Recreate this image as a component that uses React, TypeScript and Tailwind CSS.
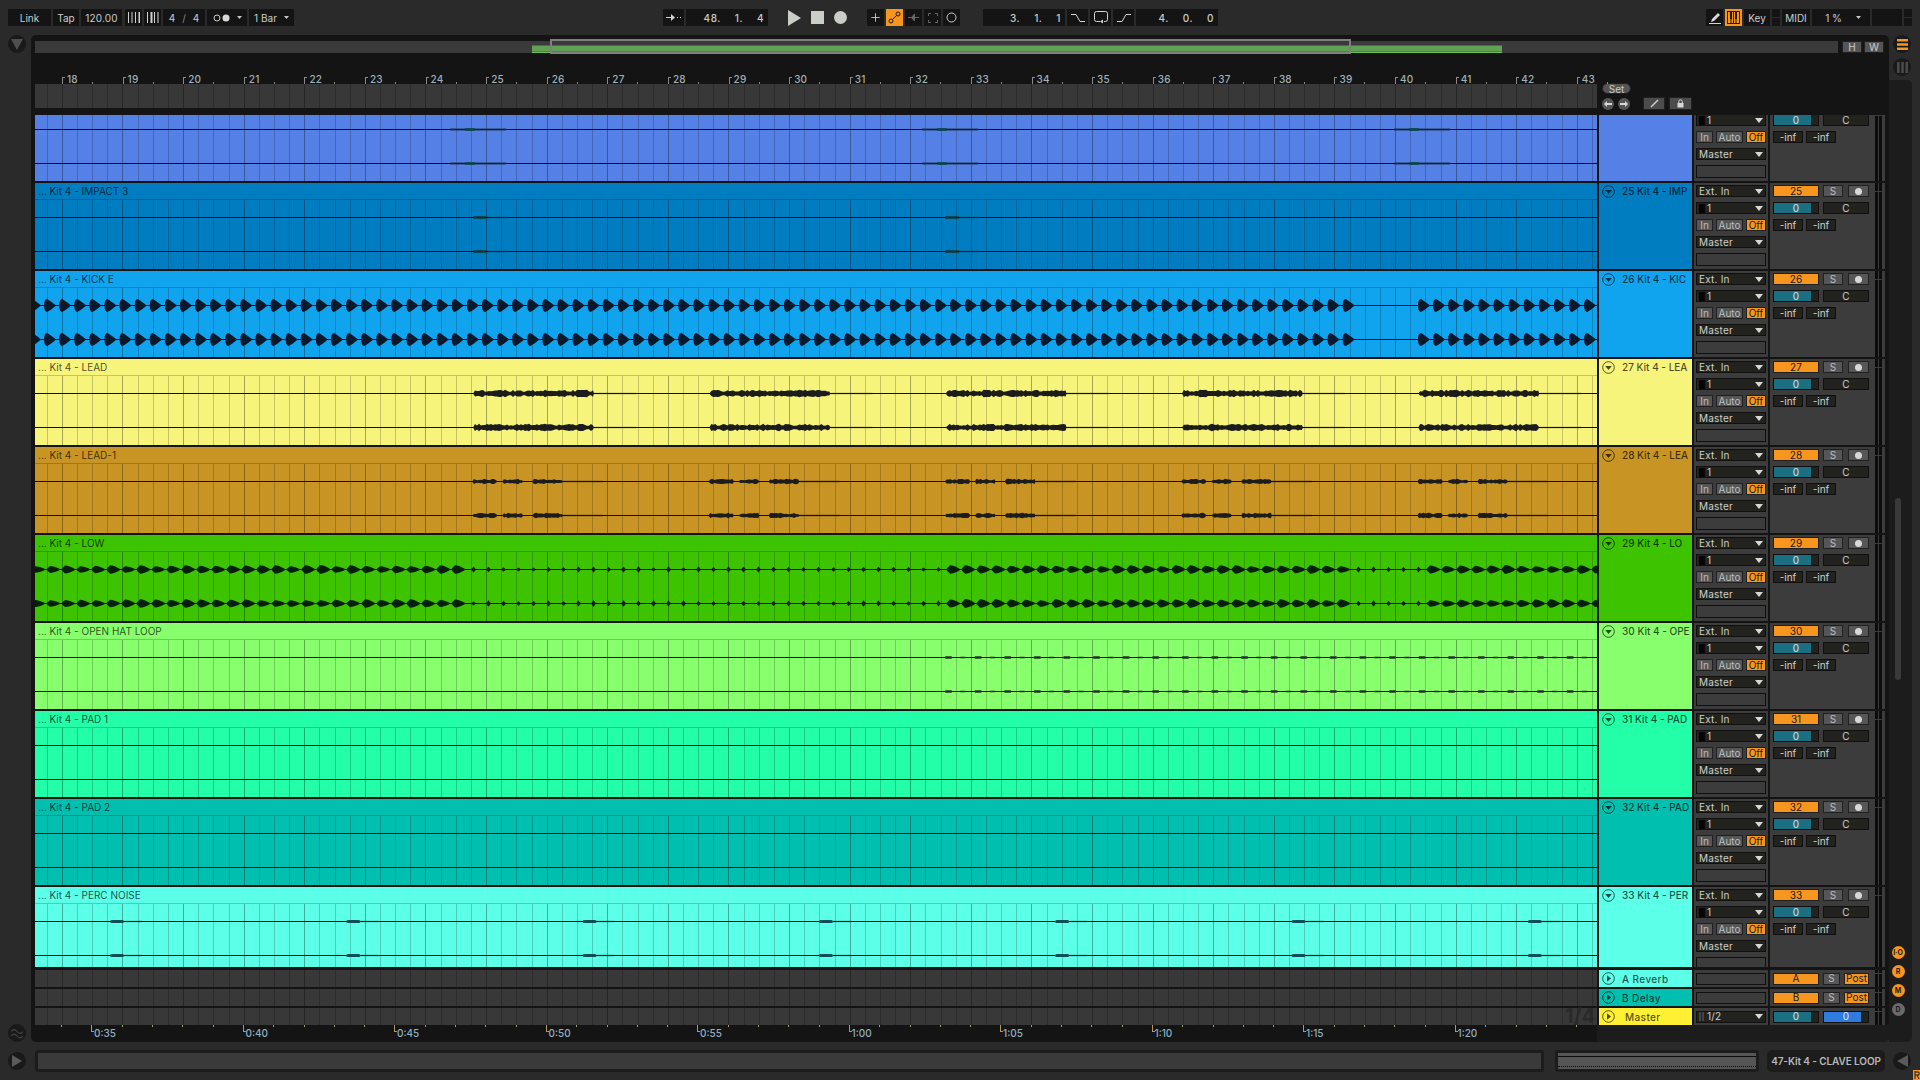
import { Plus } from "lucide-react";
import type { ReactNode } from "react";

const CLIP_W = 1562;

// tiny seeded random so the waveforms stay the same between renders
const rng = (seed: number) => () => {
  seed = (seed * 9301 + 49297) % 233280;
  return seed / 233280;
};

const range = (n: number) => Array.from({ length: n }, (_, i) => i);

const gridPaths = (h: number) => {
  let beats = "";
  let bars = "";
  for (let i = 0; i < 104; i++) {
    const x = Math.round(11.7 + 15.15 * i) + 0.5;
    if ((i + 3) % 4 === 0) bars += `M${x} 0V${h}`;
    else beats += `M${x} 0V${h}`;
  }
  return { beats, bars };
};

const Grid = ({ h }: { h: number }) => {
  const { beats, bars } = gridPaths(h);
  return (
    <>
      <path d={beats} stroke="#000" strokeOpacity="0.2" />
      <path d={bars} stroke="#000" strokeOpacity="0.32" />
    </>
  );
};

// generic noisy blob between x0 and x1 around the lane line
const blob = (x0: number, x1: number, y: number, amp: number, rand: () => number) => {
  let top = `M${x0} ${y}`;
  let bottom = "";
  for (let x = x0 + 2; x < x1; x += 2) {
    const h = amp * (0.55 + rand() * 0.7);
    top += `L${x} ${(y - h).toFixed(1)}`;
    bottom = `L${x} ${(y + h).toFixed(1)}` + bottom;
  }
  return `${top}L${x1} ${y}${bottom}Z`;
};

const kickShape = (x: number, y: number) =>
  `M${x} ${y}Q${x} ${y - 6.5} ${x + 3} ${y - 6.5}Q${x + 6} ${y - 5} ${x + 12} ${y}Q${x + 6} ${y + 5} ${x + 3} ${y + 6.5}Q${x} ${y + 6.5} ${x} ${y}Z`;

const lowShape = (x: number, y: number, hh: number) =>
  `M${x} ${y}L${x + 4} ${y - hh}Q${x + 8} ${y - hh} ${x + 15} ${y}Q${x + 8} ${y + hh} ${x + 4} ${y + hh}Z`;

const tickShape = (x: number, y: number, hh: number) =>
  `M${x} ${y}L${x + 2.5} ${y - hh}L${x + 5} ${y}L${x + 2.5} ${y + hh}Z`;

type WaveKind = "none" | "blue" | "impact" | "kick" | "lead" | "lead1" | "low" | "hat" | "perc";

const Lane = ({ kind, y, seed }: { kind: WaveKind; y: number; seed: number }) => {
  const rand = rng(seed);
  const off = -35;
  if (kind === "kick") {
    let d = "";
    for (let x = 29; x < 1343; x += 15.1) d += kickShape(x + off, y);
    for (let x = 1418; x < 1600; x += 15.1) d += kickShape(x + off, y);
    return <path d={d} fill="#07192b" />;
  }
  if (kind === "low") {
    let d = "";
    for (let x = 31; x < 1600; x += 15) {
      const big = x < 462 || (x >= 944 && x < 1345) || x >= 1418;
      if (big) d += lowShape(x + off, y, 3.2 + rand() * 1.2);
      else d += tickShape(x + off + 5, y, 2 + rand() * 1.4);
    }
    return <path d={d} fill="#04200a" />;
  }
  if (kind === "hat") {
    return (
      <>
        {range(44).map((i) => (
          <rect
            key={i}
            x={945 + i * 14.8 + off}
            y={y - (i % 2 ? 1 : 1.5)}
            width={i % 2 ? 6 : 7}
            height={i % 2 ? 2 : 3}
            rx={1}
            fill="#24402a"
            opacity={i % 2 ? 0.55 : 0.8}
          />
        ))}
      </>
    );
  }
  if (kind === "lead") {
    return (
      <>
        {range(5).map((i) => {
          const s = 473 + i * 236.3 + off;
          return (
            <g key={i}>
              <path d={blob(s, s + 121, y, 3, rand)} fill="#1c1c1c" />
              <rect x={s + 121} y={y - 1} width={42} height={2} fill="#1c1c1c" opacity="0.22" />
            </g>
          );
        })}
      </>
    );
  }
  if (kind === "lead1") {
    return (
      <>
        {range(5).map((i) => {
          const s = 472 + i * 236.3 + off;
          return (
            <g key={i}>
              <path d={blob(s, s + 26, y, 2.2, rand)} fill="#1c1c1c" />
              <path d={blob(s + 30, s + 51, y, 2.2, rand)} fill="#1c1c1c" />
              <path d={blob(s + 60, s + 91, y, 2.2, rand)} fill="#1c1c1c" />
              <rect x={s + 91} y={y - 1} width={40} height={2} fill="#1c1c1c" opacity="0.3" />
            </g>
          );
        })}
      </>
    );
  }
  if (kind === "perc") {
    return (
      <>
        {range(7).map((i) => {
          const s = 110 + i * 236.3 + off;
          return (
            <g key={i}>
              <rect x={s} y={y - 1.5} width={14} height={3} rx={1.5} fill="#0b4f5a" />
              <rect x={s + 14} y={y - 1} width={18} height={2} fill="#0b4f5a" opacity="0.25" />
            </g>
          );
        })}
      </>
    );
  }
  if (kind === "impact") {
    return (
      <>
        {[473, 945].map((x) => (
          <g key={x}>
            <rect x={x + off} y={y - 1.5} width={14} height={3} fill="#0b3a3e" opacity="0.8" />
            <rect x={x + off + 14} y={y - 1} width={20} height={2} fill="#0b3a3e" opacity="0.3" />
          </g>
        ))}
      </>
    );
  }
  if (kind === "blue") {
    return (
      <>
        {[470, 942, 1414].map((x) => (
          <g key={x}>
            <rect x={x + off - 20} y={y - 1.5} width={56} height={3} fill="#1b3550" opacity="0.45" />
            <rect x={x + off - 5} y={y - 1.5} width={10} height={3} fill="#0b4a50" opacity="0.85" />
          </g>
        ))}
      </>
    );
  }
  return null;
};

const Waveform = ({ kind, seed }: { kind: WaveKind; seed: number }) => (
  <svg width={CLIP_W} height={69} className="block shrink-0">
    <Grid h={69} />
    <rect x={0} y={17} width={CLIP_W} height={1} fill="#0d0d0d" />
    <rect x={0} y={51} width={CLIP_W} height={1} fill="#0d0d0d" />
    <Lane kind={kind} y={17.5} seed={seed} />
    <Lane kind={kind} y={51.5} seed={seed + 7} />
  </svg>
);

const Caret = ({ color = "#d8d8d8" }: { color?: string }) => (
  <svg width="8" height="5" viewBox="0 0 8 5" className="shrink-0">
    <path d="M0 0h8L4 5z" fill={color} />
  </svg>
);

const Drop = ({ children, icon }: { children?: ReactNode; icon?: ReactNode }) => (
  <div className="flex h-3 items-center border border-[#101010] bg-[#22221e] pr-[2px] pl-[2px] text-[#d0d0c9]">
    {icon}
    <span className="-mt-px flex-1 truncate tracking-[0.2px]">{children}</span>
    <Caret />
  </div>
);

const EmptyBox = () => <div className="h-[13px] shrink-0 border border-[#101010] bg-[#3c3c3c]" />;

const Vol = ({ label, color = "bg-[#1b6f82]" }: { label: string; color?: string }) => (
  <div className="relative flex h-3 w-[46px] items-center justify-center border border-[#101010] bg-[#22221e] text-[#dfe8e8]">
    <div className={`absolute top-0 bottom-0 left-0 w-[37px] ${color}`} />
    <span className="relative -mt-px">{label}</span>
  </div>
);

const Meter = ({ segment = 8 }: { segment?: number }) => (
  <div className="flex h-full w-[10px] shrink-0 gap-px pr-[3px]">
    {[0, 1].map((i) => (
      <div key={i} className="flex w-[3px] flex-col gap-px">
        <div className="shrink-0 bg-[#0c0c0c]" style={{ height: segment }} />
        <div className="flex-1 bg-[#0c0c0c]" />
      </div>
    ))}
  </div>
);

const Toggle = ({ children, w }: { children?: ReactNode; w: string }) => (
  <div className={`flex h-3 items-center justify-center border border-[#202020] bg-[#565656] pb-px text-[#bcbcbc] ${w}`}>
    {children}
  </div>
);

const OrangeBtn = ({ children, w }: { children: ReactNode; w: string }) => (
  <div className={`flex h-3 items-center justify-center border border-[#202020] bg-[#f7961e] pb-px text-[#1c1c1c] ${w}`}>
    {children}
  </div>
);

const DarkBtn = ({ children, w }: { children: ReactNode; w: string }) => (
  <div className={`flex h-3 items-center justify-center border border-[#101010] bg-[#22221e] pb-px text-[#d0d0c9] ${w}`}>
    {children}
  </div>
);

const Unfold = ({ open = true }: { open?: boolean }) => (
  <svg width="13" height="13" viewBox="0 0 13 13" className="shrink-0">
    <circle cx="6.5" cy="6.5" r="5.8" fill="none" stroke="#000" strokeOpacity="0.65" />
    {open ? (
      <path d="M3.2 5h6.6L6.5 9z" fill="#000" fillOpacity="0.7" />
    ) : (
      <path d="M5 3.2v6.6L9 6.5z" fill="#000" fillOpacity="0.7" />
    )}
  </svg>
);

type Track = { n: number; name: string; short: string; color: string; wave: WaveKind; height: string; clipped?: boolean };

const tracks: Track[] = [
  { n: 24, name: "", short: "", color: "#5580e6", wave: "blue", height: "h-[66px]", clipped: true },
  { n: 25, name: "IMPACT 3", short: "IMP", color: "#007dc0", wave: "impact", height: "h-[86px]" },
  { n: 26, name: "KICK E", short: "KIC", color: "#10a4ee", wave: "kick", height: "h-[86px]" },
  { n: 27, name: "LEAD", short: "LEA", color: "#f7f47c", wave: "lead", height: "h-[86px]" },
  { n: 28, name: "LEAD-1", short: "LEA", color: "#c89525", wave: "lead1", height: "h-[86px]" },
  { n: 29, name: "LOW", short: "LO", color: "#3dc300", wave: "low", height: "h-[86px]" },
  { n: 30, name: "OPEN HAT LOOP", short: "OPE", color: "#88ff6c", wave: "hat", height: "h-[86px]" },
  { n: 31, name: "PAD 1", short: "PAD", color: "#22ffa8", wave: "none", height: "h-[86px]" },
  { n: 32, name: "PAD 2", short: "PAD", color: "#00bfaf", wave: "none", height: "h-[86px]" },
  { n: 33, name: "PERC NOISE", short: "PER", color: "#5cffe8", wave: "perc", height: "h-[80px]" },
];

const TrackRow = ({ t }: { t: Track }) => (
  <div className={`flex shrink-0 gap-[2px] overflow-hidden pl-1 ${t.height}`}>
    <div className="w-[1562px] shrink-0 overflow-hidden" style={{ backgroundColor: t.color }}>
      <div className={`flex h-[86px] flex-col ${t.clipped ? "-mt-5" : ""}`}>
        <div className="h-[17px] shrink-0 border-b border-black/20 pt-[2px] pl-[3px] text-black/70">
          {t.name && `... Kit 4 - ${t.name}`}
        </div>
        <Waveform kind={t.wave} seed={t.n * 31} />
      </div>
    </div>
    <div className="flex w-[93px] shrink-0 gap-[7px] pt-[2px] pl-[3px] font-medium text-black/70" style={{ backgroundColor: t.color }}>
      {!t.clipped && (
        <>
          <Unfold />
          <span className="whitespace-nowrap">{`${t.n} Kit 4 - ${t.short}`}</span>
        </>
      )}
    </div>
    <div className="w-[74px] shrink-0 overflow-hidden bg-[#3c3c3c]">
      <div className={`flex h-[86px] flex-col gap-[5px] px-[2px] pt-[2px] ${t.clipped ? "-mt-5" : ""}`}>
        <Drop>{t.clipped ? "" : "Ext. In"}</Drop>
        <Drop icon={<div className="mr-[2px] h-[9px] w-[6px] bg-[#050505]" />}>1</Drop>
        <div className="flex gap-[3px]">
          <Toggle w="w-[17px]">In</Toggle>
          <Toggle w="w-[27px]">Auto</Toggle>
          <OrangeBtn w="w-5">Off</OrangeBtn>
        </div>
        <Drop>Master</Drop>
        <EmptyBox />
      </div>
    </div>
    <div className="flex w-[115px] shrink-0 overflow-hidden bg-[#3c3c3c]">
      <div className={`flex h-[86px] w-[105px] shrink-0 flex-col gap-[5px] pt-[2px] pl-[3px] ${t.clipped ? "-mt-5" : ""}`}>
        <div className="flex">
          {t.clipped ? (
            <div className="h-3" />
          ) : (
            <>
              <OrangeBtn w="w-[46px]">{t.n}</OrangeBtn>
              <div className="ml-1">
                <Toggle w="w-5">S</Toggle>
              </div>
              <div className="ml-[5px]">
                <Toggle w="w-[21px]">
                  <div className="mt-px h-[7px] w-[7px] rounded-full bg-[#d8d8d8]" />
                </Toggle>
              </div>
            </>
          )}
        </div>
        <div className="flex gap-1">
          <Vol label="0" />
          <DarkBtn w="w-[46px]">C</DarkBtn>
        </div>
        <div className="flex gap-[3px]">
          <DarkBtn w="w-[30px]">-inf</DarkBtn>
          <DarkBtn w="w-[30px]">-inf</DarkBtn>
        </div>
      </div>
      <Meter segment={t.clipped ? 0 : 8} />
    </div>
  </div>
);

const ReturnRow = ({
  label,
  color,
  indent,
  input,
  mixer,
  overlay,
}: {
  label: string;
  color: string;
  indent?: string;
  input: ReactNode;
  mixer: ReactNode;
  overlay?: ReactNode;
}) => (
  <div className="flex h-[17px] shrink-0 gap-[2px] pl-1">
    <div className="relative w-[1562px] shrink-0 bg-[#383838]">
      <svg width={CLIP_W} height={17} className="block">
        <Grid h={17} />
      </svg>
      {overlay}
    </div>
    <div className={`flex w-[93px] shrink-0 items-center gap-[7px] pl-[3px] font-medium text-black/70 ${color}`}>
      <Unfold open={false} />
      <span className={`tracking-[0.4px] ${indent ?? ""}`}>{label}</span>
    </div>
    <div className="flex w-[74px] shrink-0 flex-col justify-center bg-[#3c3c3c] px-[2px]">{input}</div>
    <div className="flex w-[115px] shrink-0 items-center bg-[#3c3c3c]">
      <div className="flex w-[105px] shrink-0 pl-[3px]">{mixer}</div>
      <Meter segment={3} />
    </div>
  </div>
);

const Tb = ({ w, children, className = "" }: { w: string; children?: ReactNode; className?: string }) => (
  <div className={`flex h-[17px] shrink-0 items-center justify-center bg-[#141414] text-[#c8cdcd] ${w} ${className}`}>
    {children}
  </div>
);

const Readout = ({ parts }: { parts: string[] }) => (
  <Tb w="w-[82px]" className="justify-end gap-[14px] pr-1 font-medium tracking-[0.5px]">
    {parts.map((p, i) => (
      <span key={i}>{p}</span>
    ))}
  </Tb>
);

const BarsIcon = ({ thick }: { thick: number }) => (
  <svg width="13" height="11" viewBox="0 0 13 11">
    {range(4).map((i) => (
      <rect key={i} x={i * 3.5 + 1} y="0" width={i === thick ? 2 : 1} height="11" fill="#d0d0d0" />
    ))}
  </svg>
);

const Icon = ({ children, w = 17, h = 13 }: { children: ReactNode; w?: number; h?: number }) => (
  <svg width={w} height={h} viewBox={`0 0 ${w} ${h}`} fill="none" stroke="#d4d4d4">
    {children}
  </svg>
);

const TopBar = () => (
  <div className="flex h-[35px] shrink-0 items-center pl-2">
    <Tb w="w-[43px]">Link</Tb>
    <Tb w="w-[26px] ml-[2px]">Tap</Tb>
    <Tb w="w-[41px] ml-[2px]" className="tracking-[0.2px]">120.00</Tb>
    <Tb w="w-[17px] ml-[3px]">
      <BarsIcon thick={3} />
    </Tb>
    <Tb w="w-[17px] ml-[2px]">
      <BarsIcon thick={1} />
    </Tb>
    <Tb w="w-[42px] ml-[2px]" className="gap-[7px]">
      <span>4</span>
      <span className="text-[#888]">/</span>
      <span>4</span>
    </Tb>
    <Tb w="w-[40px] ml-[2px]" className="gap-[7px]">
      <svg width="17" height="8" viewBox="0 0 17 8">
        <circle cx="4" cy="4" r="3" fill="none" stroke="#c8c8c8" />
        <circle cx="13" cy="4" r="3.5" fill="#d8d8d8" />
      </svg>
      <svg width="5" height="3" viewBox="0 0 5 3">
        <path d="M0 0h5L2.5 3z" fill="#c8c8c8" />
      </svg>
    </Tb>
    <Tb w="w-[45px] ml-[2px]" className="gap-[7px]">
      <span>1 Bar</span>
      <svg width="5" height="3" viewBox="0 0 5 3">
        <path d="M0 0h5L2.5 3z" fill="#c8c8c8" />
      </svg>
    </Tb>

    <Tb w="w-[21px] ml-[369px]">
      <Icon>
        <path d="M1 6.5h6M12 6.5h1M15 6.5h1" />
        <path d="M6 3l4 3.5L6 10z" fill="#d4d4d4" stroke="none" />
      </Icon>
    </Tb>
    <div className="ml-[2px]">
      <Readout parts={["48.", "1.", "4"]} />
    </div>
    <svg width="13" height="16" viewBox="0 0 13 16" className="ml-5 shrink-0">
      <path d="M0 0l13 8L0 16z" fill="#c9cec6" />
    </svg>
    <div className="ml-[10px] h-[13px] w-[13px] shrink-0 bg-[#c9cec6]" />
    <div className="ml-[10px] h-[13px] w-[13px] shrink-0 rounded-full bg-[#c9cec6]" />

    <Tb w="w-[17px] ml-5">
      <Plus size={13} color="#e0e0e0" strokeWidth={1.5} />
    </Tb>
    <Tb w="w-[17px] ml-[2px]" className="!bg-[#f7961e]">
      <svg width="13" height="13" viewBox="0 0 13 13" fill="none" stroke="#1c1c1c">
        <circle cx="3" cy="10" r="2" />
        <circle cx="10" cy="3" r="2" />
        <path d="M4.5 8.5l4-4" />
      </svg>
    </Tb>
    <Tb w="w-[17px] ml-[2px]">
      <svg width="11" height="9" viewBox="0 0 11 9">
        <path d="M0 4.5h11M6.5 1L3.5 4.5 6.5 8z" stroke="#666" fill="#666" />
      </svg>
    </Tb>
    <Tb w="w-[17px] ml-[2px]">
      <svg width="10" height="10" viewBox="0 0 10 10" fill="none" stroke="#666">
        <path d="M.5 3V.5H3M7 .5h2.5V3M9.5 7v2.5H7M3 9.5H.5V7" />
      </svg>
    </Tb>
    <Tb w="w-[17px] ml-[2px]">
      <svg width="11" height="11" viewBox="0 0 11 11">
        <circle cx="5.5" cy="5.5" r="4.5" fill="none" stroke="#d0d0d0" />
      </svg>
    </Tb>

    <div className="ml-[23px]">
      <Readout parts={["3.", "1.", "1"]} />
    </div>
    <Tb w="w-[21px] ml-[2px]">
      <Icon w={14} h={10}>
        <path d="M0 1.5h5l4 7h5" />
      </Icon>
    </Tb>
    <Tb w="w-[21px] ml-[2px]">
      <Icon w={14} h={13}>
        <path d="M6 10.5H2.5a2 2 0 0 1-2-2v-6a2 2 0 0 1 2-2h9a2 2 0 0 1 2 2v6a2 2 0 0 1-2 2H10" />
        <path d="M9 8.5v4L6 10.5z" fill="#d4d4d4" stroke="none" />
      </Icon>
    </Tb>
    <Tb w="w-[21px] ml-[2px]">
      <Icon w={14} h={10}>
        <path d="M0 8.5h5l4-7h5" />
      </Icon>
    </Tb>
    <div className="ml-[2px]">
      <Readout parts={["4.", "0.", "0"]} />
    </div>

    <Tb w="w-[17px] ml-[488px]">
      <svg width="12" height="13" viewBox="0 0 12 13">
        <path d="M3 8l6-6 2 2-6 6-3 1z" fill="#d8d8d8" />
        <rect x="0" y="12" width="12" height="1" fill="#d8d8d8" />
      </svg>
    </Tb>
    <Tb w="w-[17px] ml-[2px]" className="!bg-[#f7961e]">
      <svg width="13" height="13" viewBox="0 0 13 13">
        <rect x="0.5" y="0.5" width="12" height="12" fill="none" stroke="#1c1c1c" />
        <path d="M3 1h2v7H3zM8 1h2v7H8z" fill="#1c1c1c" />
        <path d="M4 8v4M6.5 1v11M9 8v4" stroke="#1c1c1c" />
      </svg>
    </Tb>
    <Tb w="w-[26px] ml-[2px]">Key</Tb>
    <div className="ml-[2px] flex h-[17px] w-2 shrink-0 flex-col gap-px">
      <div className="flex-1 bg-[#141414]" />
      <div className="flex-1 bg-[#141414]" />
    </div>
    <Tb w="w-[28px] ml-[2px]">MIDI</Tb>
    <Tb w="w-[58px] ml-[2px]" className="gap-[14px] pl-1">
      <span>1 %</span>
      <svg width="5" height="3" viewBox="0 0 5 3">
        <path d="M0 0h5L2.5 3z" fill="#c8c8c8" />
      </svg>
    </Tb>
    <Tb w="w-[30px] ml-[2px]" />
    <div className="ml-[2px] flex h-[17px] w-2 shrink-0 flex-col gap-px">
      <div className="flex-1 bg-[#141414]" />
      <div className="flex-1 bg-[#141414]" />
    </div>
  </div>
);

const Overview = () => (
  <div className="mt-[6px] flex h-3 shrink-0 pl-1">
    <div className="relative w-[1803px] shrink-0 bg-[#3a3a3a]">
      <div className="absolute top-1 bottom-0 left-[497px] flex w-[970px] flex-col">
        <div className="h-[1px] bg-[#4b6c4a]" />
        <div className="flex-1 bg-[#62a055]" />
        <div className="h-[1px] bg-[#2c8a78]" />
        <div className="h-[1px] bg-[#6cc050]" />
      </div>
      <div className="absolute -top-[2px] -bottom-px left-[515px] w-[801px] border-2 border-[#7f7f7f]" />
    </div>
    <div className="ml-1 flex h-3 w-5 shrink-0 items-center justify-center border border-[#202020] bg-[#555] font-medium text-[#bbb]">H</div>
    <div className="ml-[2px] flex h-3 w-5 shrink-0 items-center justify-center border border-[#202020] bg-[#555] font-medium text-[#bbb]">W</div>
  </div>
);

const BarRuler = () => (
  <div className="mt-[19px] flex h-[43px] shrink-0 pl-1">
    <div className="w-[1562px] shrink-0">
      <div className="flex h-3 pl-[27px] text-[#9fb2b8]">
        {range(26).map((i) => (
          <div key={i} className="relative flex w-[60.6px] shrink-0 items-start">
            <div className="mt-[5px] h-[7px] w-[3px] border-t border-l border-[#8a8a8a]" />
            <span className="ml-[2px] pt-px font-medium tracking-[0.2px]">{18 + i}</span>
            <div className="absolute bottom-0 left-[30px] h-[2px] w-px bg-[#8a8a6a]" />
          </div>
        ))}
      </div>
      <svg width={CLIP_W} height={24} className="block bg-[#383838]">
        <Grid h={24} />
      </svg>
    </div>
    <div className="flex-1 pl-[5px]">
      <div className="mt-[11px] flex h-[11px] w-[29px] items-center justify-center rounded-full border border-[#202020] bg-[#555] text-[#c8c8c8]">
        Set
      </div>
      <div className="mt-[3px] flex items-center">
        {[true, false].map((left, i) => (
          <div key={i} className="mr-[4px] flex h-3 w-3 items-center justify-center rounded-full bg-[#555]">
            <svg width="8" height="6" viewBox="0 0 8 6">
              <path d={left ? "M0 3l3-3v2h5v2H3v2z" : "M8 3L5 0v2H0v2h5v2z"} fill="#d8d8d8" />
            </svg>
          </div>
        ))}
        <div className="ml-[9px] flex h-[13px] w-[22px] items-center justify-center border border-[#202020] bg-[#4c4c4c]">
          <svg width="9" height="9" viewBox="0 0 9 9">
            <path d="M1 8l7-7" stroke="#d0d0d0" strokeWidth="1.5" />
          </svg>
        </div>
        <div className="ml-1 flex h-[13px] w-[23px] items-center justify-center border border-[#202020] bg-[#4c4c4c]">
          <svg width="9" height="9" viewBox="0 0 9 9">
            <path d="M1.5 4h6v4.5h-6z" fill="#d8d8d8" />
            <path d="M2.8 4V2.5a1.7 1.7 0 0 1 3.4 0V4" fill="none" stroke="#d8d8d8" />
          </svg>
        </div>
      </div>
    </div>
  </div>
);

const TimeRuler = () => {
  let ticks = "";
  for (let i = 0; i < 52; i++) ticks += `M${Math.round(26.1 + i * 30.3) + 0.5} 0v2`;
  return (
    <div className="flex h-[17px] shrink-0 pl-1">
      <div className="relative flex w-[1562px] shrink-0 pl-[56px] text-[#8fb0c0]">
        <svg width={CLIP_W} height={3} className="absolute top-0 left-0">
          <path d={ticks} stroke="#b09a5a" />
        </svg>
        {["0:35", "0:40", "0:45", "0:50", "0:55", "1:00", "1:05", "1:10", "1:15", "1:20"].map((t) => (
          <div key={t} className="flex w-[151.5px] shrink-0">
            <div className="h-[7px] w-[3px] border-b border-l border-[#b09a5a]" />
            <span className="pt-[2px] font-medium">{t}</span>
          </div>
        ))}
      </div>
      <div className="flex-1 bg-[#1c1c1c]" />
    </div>
  );
};

const RailCircle = ({ children }: { children: ReactNode }) => (
  <div className="flex h-[18px] w-[18px] shrink-0 items-center justify-center rounded-full bg-[#191919]">{children}</div>
);

const IoDot = ({ label, off }: { label: string; off?: boolean }) => (
  <div
    className={`flex h-[13px] w-[13px] items-center justify-center rounded-full text-[7px] font-bold text-[#1c1c1c] ${
      off ? "bg-[#6a6a6a]" : "bg-[#f7961e]"
    }`}
  >
    {label}
  </div>
);

export default function App() {
  return (
    <div className="flex h-[1080px] w-[1920px] flex-col overflow-hidden bg-[#2a2a2a] text-[10px] leading-[12px] [font-family:Inter,sans-serif]">
      <TopBar />

      <div className="flex h-[1007px] shrink-0">
        <div className="flex w-[31px] shrink-0 flex-col justify-between pl-2">
          <RailCircle>
            <svg width="12" height="11" viewBox="0 0 12 11">
              <path d="M0 0h12L6 11z" fill="#4e4e4e" />
            </svg>
          </RailCircle>
          <RailCircle>
            <svg width="12" height="11" viewBox="0 0 12 11" fill="none" stroke="#444" strokeWidth="1.2">
              <path d="M0 3.5c2-2.5 4-2.5 6 0s4 2.5 6 0M0 8c2-2.5 4-2.5 6 0s4 2.5 6 0" />
            </svg>
          </RailCircle>
        </div>

        <div className="flex w-[1858px] shrink-0 flex-col overflow-hidden rounded-[5px] bg-[#141414]">
          <Overview />
          <BarRuler />
          <div className="flex flex-col gap-[2px]">
            {tracks.map((t) => (
              <TrackRow key={t.n} t={t} />
            ))}
          </div>
          <div className="mt-[3px] flex flex-col gap-[2px]">
            <ReturnRow
              label="A Reverb"
              color="bg-[#5cffe8]"
              input={<div className="h-3 border border-[#101010] bg-[#3c3c3c]" />}
              mixer={
                <>
                  <OrangeBtn w="w-[46px]">A</OrangeBtn>
                  <div className="ml-1">
                    <Toggle w="w-[17px]">S</Toggle>
                  </div>
                  <div className="ml-1">
                    <OrangeBtn w="w-[25px]">Post</OrangeBtn>
                  </div>
                </>
              }
            />
            <ReturnRow
              label="B Delay"
              color="bg-[#00bfaf]"
              input={<div className="h-3 border border-[#101010] bg-[#3c3c3c]" />}
              mixer={
                <>
                  <OrangeBtn w="w-[46px]">B</OrangeBtn>
                  <div className="ml-1">
                    <Toggle w="w-[17px]">S</Toggle>
                  </div>
                  <div className="ml-1">
                    <OrangeBtn w="w-[25px]">Post</OrangeBtn>
                  </div>
                </>
              }
            />
            <ReturnRow
              label="Master"
              color="bg-[#fff034]"
              indent="ml-[3px]"
              overlay={
                <span className="absolute top-0 right-[2px] text-[20px] leading-[17px] font-bold text-[#2a2a2a]">1/4</span>
              }
              input={
                <Drop
                  icon={
                    <div className="mr-[3px] flex gap-px">
                      <div className="h-[9px] w-[2px] bg-[#444]" />
                      <div className="h-[9px] w-[2px] bg-[#444]" />
                    </div>
                  }
                >
                  1/2
                </Drop>
              }
              mixer={
                <>
                  <Vol label="0" />
                  <div className="ml-1">
                    <Vol label="0" color="bg-[#2f7ce0]" />
                  </div>
                </>
              }
            />
          </div>
          <TimeRuler />
        </div>

        <div className="flex w-[31px] shrink-0 flex-col">
          <div className="flex h-[45px] shrink-0 flex-col gap-[5px] pl-1">
            <RailCircle>
              <svg width="11" height="11" viewBox="0 0 11 11">
                <path d="M0 0h11v2.4H0zM0 4.3h11v2.4H0zM0 8.6h11V11H0z" fill="#f7961e" />
              </svg>
            </RailCircle>
            <RailCircle>
              <svg width="11" height="11" viewBox="0 0 11 11">
                <path d="M0 0h2.6v11H0zM4.2 0h2.6v11H4.2zM8.4 0H11v11H8.4z" fill="#4a4a4a" />
              </svg>
            </RailCircle>
          </div>
          <div className="flex h-[962px] w-[23px] shrink-0 flex-col items-center rounded-r-[5px] bg-[#1c1c1c] pr-[5px] pb-[26px]">
            <div className="mt-[418px] h-[182px] w-[6px] rounded-full bg-[#3a3a3a]" />
            <div className="mt-auto flex flex-col gap-[6px]">
              <IoDot label="I·O" />
              <IoDot label="R" />
              <IoDot label="M" />
              <IoDot label="D" off />
            </div>
          </div>
        </div>
      </div>

      <div className="flex h-[38px] shrink-0 items-center">
        <div className="flex w-[35px] shrink-0 pl-2">
          <RailCircle>
            <svg width="10" height="12" viewBox="0 0 10 12">
              <path d="M0 0l10 6L0 12z" fill="#5a5a5a" />
            </svg>
          </RailCircle>
        </div>
        <div className="h-[22px] w-[1509px] shrink-0 rounded-[3px] border-[3px] border-[#1c1c1c] bg-[#3a3a3a]" />
        <div className="ml-[11px] flex h-[22px] w-[204px] shrink-0 flex-col justify-center gap-px rounded-[3px] border-[3px] border-[#1c1c1c] bg-[#555]">
          <div className="mt-[1px] h-px bg-[#0c0c0c]" />
          <div className="h-[7px]" />
          <div className="h-px border-t border-dotted border-[#0c0c0c]" />
        </div>
        <div className="ml-2 flex h-[22px] w-[118px] shrink-0 items-center justify-center rounded-[5px] bg-[#1c1c1c] font-semibold tracking-[-0.1px] whitespace-nowrap text-[#b8b8b8]">
          47-Kit 4 - CLAVE LOOP
        </div>
        <div className="ml-2 shrink-0">
          <RailCircle>
            <svg width="11" height="12" viewBox="0 0 11 12">
              <path d="M11 0L0 6l11 6z" fill="#5a5a5a" />
            </svg>
          </RailCircle>
        </div>
        <div className="mt-[28px] ml-[2px] flex h-[10px] w-[8px] shrink-0 items-center justify-center bg-[#f7961e]">
          <svg width="6" height="8" viewBox="0 0 6 8">
            <path d="M1 0v8M1 1h4v3H1M3 4l2 4" fill="none" stroke="#1c1c1c" />
          </svg>
        </div>
      </div>
    </div>
  );
}
